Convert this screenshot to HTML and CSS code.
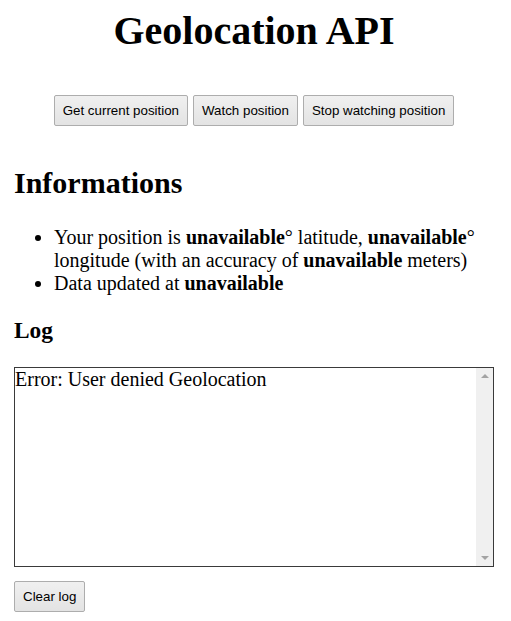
FILE: index.html
```html
<!DOCTYPE html>
<html lang="en">
<head>
<meta charset="utf-8">
<title>Geolocation API</title>
<link rel="stylesheet" href="styles.css">
</head>
<body>
<h1 class="title">Geolocation API</h1>
<div class="actions">
  <button class="btn" type="button">Get current position</button>
  <button class="btn" type="button">Watch position</button>
  <button class="btn" type="button">Stop watching position</button>
</div>
<h2 class="section-title">Informations</h2>
<ul class="info-list">
  <li>Your position is <b>unavailable</b>° latitude, <b>unavailable</b>° longitude (with an accuracy of <b>unavailable</b> meters)</li>
  <li>Data updated at <b>unavailable</b></li>
</ul>
<h3 class="log-title">Log</h3>
<div class="log-box">
  <textarea class="log" readonly>Error: User denied Geolocation</textarea>
  <div class="scrollbar" aria-hidden="true">
    <span class="arrow arrow-up"></span>
    <span class="arrow arrow-down"></span>
  </div>
</div>
<button class="btn clear-btn" type="button">Clear log</button>
</body>
</html>
```
FILE: styles.css
```css
html, body {
  background: #ffffff;
}
body {
  margin: 8px 17px 8px 14px;
  font-family: "Liberation Serif", "Times New Roman", serif;
  font-size: 20px;
  color: #000;
}
.title {
  margin: 0 0 41px;
  font-size: 40px;
  text-align: center;
  line-height: 46px;
}
.actions {
  display: flex;
  justify-content: center;
  gap: 5px;
}
.btn {
  font-family: "Liberation Sans", Arial, sans-serif;
  font-size: 13.33px;
  color: #000;
  height: 31px;
  padding: 0 8px;
  border: 1px solid #adadad;
  border-radius: 2px;
  background: linear-gradient(#f0f0f0, #e3e3e3);
  margin: 0;
}
.section-title {
  margin: 40px 0 25px;
  font-size: 30px;
  line-height: 34.5px;
}
.info-list {
  margin: 0;
  padding-left: 40px;
  line-height: 23px;
}
.log-title {
  margin: 22px 0 23px;
  font-size: 23.4px;
  line-height: 27px;
}
.log-box {
  display: flex;
  box-sizing: border-box;
  width: 480px;
  height: 200px;
  border: 1px solid #3a3a3a;
}
.log {
  flex: 1;
  min-width: 0;
  margin: 0;
  padding: 0;
  border: 0;
  font-family: "Liberation Serif", "Times New Roman", serif;
  font-size: 20px;
  line-height: 23px;
  color: #000;
  resize: none;
  overflow: hidden;
  outline: none;
  background: #fff;
}
.scrollbar {
  width: 17px;
  flex: none;
  background: #f0f0f0;
  display: flex;
  flex-direction: column;
  justify-content: space-between;
  align-items: center;
  padding: 6px 0;
}
.arrow {
  display: block;
  width: 0;
  height: 0;
  border-left: 4px solid transparent;
  border-right: 4px solid transparent;
}
.arrow-up {
  border-bottom: 4px solid #a3a3a3;
}
.arrow-down {
  border-top: 4px solid #a3a3a3;
}
.clear-btn {
  display: block;
  margin-top: 14px;
}
```
